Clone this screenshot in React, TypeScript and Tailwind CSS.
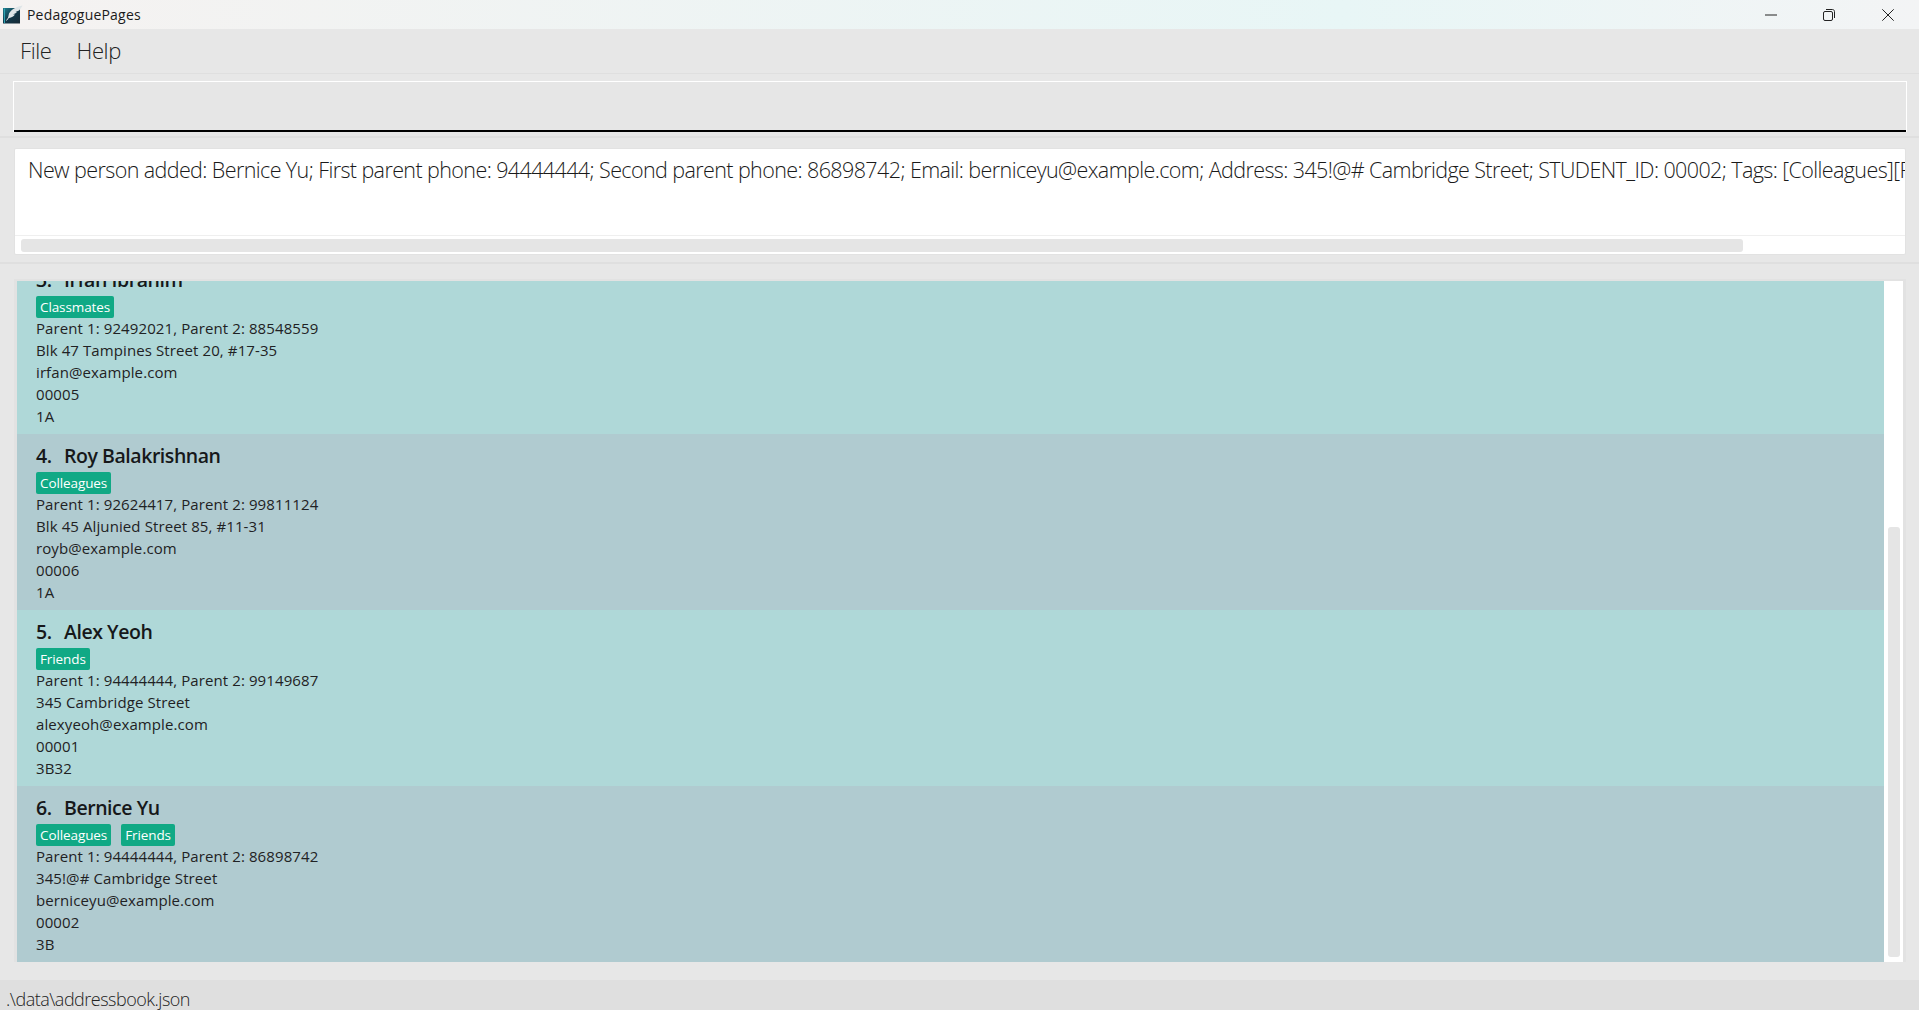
const SANS = 'font-["Open_Sans","Noto_Sans",sans-serif]'

interface Person {
  index: number
  name: string
  tags: string[]
  phones: string
  address: string
  email: string
  studentId: string
  className: string
}

const people: Person[] = [
  {
    index: 3,
    name: 'Irfan Ibrahim',
    tags: ['Classmates'],
    phones: 'Parent 1: 92492021, Parent 2: 88548559',
    address: 'Blk 47 Tampines Street 20, #17-35',
    email: 'irfan@example.com',
    studentId: '00005',
    className: '1A',
  },
  {
    index: 4,
    name: 'Roy Balakrishnan',
    tags: ['Colleagues'],
    phones: 'Parent 1: 92624417, Parent 2: 99811124',
    address: 'Blk 45 Aljunied Street 85, #11-31',
    email: 'royb@example.com',
    studentId: '00006',
    className: '1A',
  },
  {
    index: 5,
    name: 'Alex Yeoh',
    tags: ['Friends'],
    phones: 'Parent 1: 94444444, Parent 2: 99149687',
    address: '345 Cambridge Street',
    email: 'alexyeoh@example.com',
    studentId: '00001',
    className: '3B32',
  },
  {
    index: 6,
    name: 'Bernice Yu',
    tags: ['Colleagues', 'Friends'],
    phones: 'Parent 1: 94444444, Parent 2: 86898742',
    address: '345!@# Cambridge Street',
    email: 'berniceyu@example.com',
    studentId: '00002',
    className: '3B',
  },
]

const resultText =
  'New person added: Bernice Yu; First parent phone: 94444444; Second parent phone: 86898742; Email: berniceyu@example.com; Address: 345!@# Cambridge Street; STUDENT_ID: 00002; Tags: [Colleagues][Friends]'

function AppIcon() {
  return (
    <svg width="20" height="19" viewBox="0 0 20 19" className="shrink-0">
      <defs>
        <linearGradient id="iconBg" x1="0" y1="0" x2="1" y2="1">
          <stop offset="0" stopColor="#1f7f8f" />
          <stop offset="0.5" stopColor="#12384a" />
          <stop offset="1" stopColor="#1a2a36" />
        </linearGradient>
      </defs>
      <rect x="0" y="3" width="17" height="15.5" fill="url(#iconBg)" />
      <path d="M1.5 3.5V18" stroke="#2fa3b3" strokeWidth="1" />
      <path d="M19.5 0.5C14 1.5 8.5 4 6 8.5L5 13C8 13 10.5 11.5 12 9.5L10 9.5L14 7.5L12.5 7L16 5.5C17.5 4 18.8 2.2 19.5 0.5Z" fill="#dfe5e8" />
      <path d="M8 9.5L3.5 15.5" stroke="#dfe5e8" strokeWidth="1" />
    </svg>
  )
}

function WindowControls() {
  return (
    <div className="flex items-center ml-auto">
      <svg width="12" height="12" viewBox="0 0 12 12" className="mr-[46px]">
        <path d="M0 6H12" stroke="#222" strokeWidth="1" />
      </svg>
      <svg width="12" height="12" viewBox="0 0 12 12" className="mr-[47px]">
        <rect x="0.5" y="2.5" width="9" height="9" rx="1.5" fill="none" stroke="#222" />
        <path d="M3 0.5H9.5C10.6 0.5 11.5 1.4 11.5 2.5V9" fill="none" stroke="#222" />
      </svg>
      <svg width="12" height="12" viewBox="0 0 12 12" className="mr-[25px]">
        <path d="M0.3 0.3L11.7 11.7M11.7 0.3L0.3 11.7" stroke="#222" strokeWidth="1" />
      </svg>
    </div>
  )
}

function PersonCard({ person, shaded }: { person: Person; shaded: boolean }) {
  return (
    <div className={`h-[176px] shrink-0 pl-[19px] pt-[7px] ${shaded ? 'bg-[#b0cbd0]' : 'bg-[#afd8d8]'}`}>
      <div className="h-[30px] flex items-center text-[19.5px] font-semibold text-[#16181a] whitespace-nowrap tracking-[-0.45px]">
        <span className="w-[28px] shrink-0">{person.index}.</span>
        <span>{person.name}</span>
      </div>
      <div className="flex gap-[10px] h-[22px] mt-[1px]">
        {person.tags.map(tag => (
          <span key={tag} className="h-[22px] px-[4px] flex items-center rounded-[2px] bg-[#10a985] text-white text-[13.5px] tracking-[-0.1px]">
            {tag}
          </span>
        ))}
      </div>
      <div className="-mt-[1px] text-[15px] leading-[22px] text-[#1f2224] tracking-[0.1px]">
        <div>{person.phones}</div>
        <div>{person.address}</div>
        <div>{person.email}</div>
        <div>{person.studentId}</div>
        <div>{person.className}</div>
      </div>
    </div>
  )
}

export default function App() {
  return (
    <div className={`w-[1919px] h-[1010px] flex flex-col overflow-hidden bg-[#e7e7e7] ${SANS}`}>
      {/* Title bar */}
      <div className="h-[29px] shrink-0 flex items-center pl-[3px] bg-linear-to-r from-[#f5f2f1] via-[#e8f6f6] via-70% to-[#f3f4f5]">
        <AppIcon />
        <span className="ml-[4px] text-[14px] text-[#1a1a1a] tracking-[0.2px]">PedagoguePages</span>
        <WindowControls />
      </div>

      {/* Menu */}
      <div className="h-[45px] shrink-0 flex items-center pl-[20px] pb-[2px] gap-[25px] border-b border-[#dfdfdf] text-[22px] font-light text-[#222] tracking-[-0.4px]">
        <span>File</span>
        <span>Help</span>
      </div>

      {/* Command box */}
      <div className="h-[64px] shrink-0 pt-[7px] pl-[13px] pr-[12px] border-b-2 border-[#dfdfdf]">
        <div className="h-[51px] border border-b-0 border-white bg-[#e6e6e6] shadow-[inset_0_-2px_0_#000]" />
      </div>

      {/* Result display */}
      <div className="h-[126px] shrink-0 pt-[10px] pl-[14px] pr-[13px] border-b-2 border-[#dfdfdf]">
        <div className="h-[107px] flex flex-col bg-white border border-[#e2e2e2] rounded-[2px]">
          <div className="h-[87px] shrink-0 overflow-hidden border-b border-[#efefef] pl-[13px] pt-[6px] text-[21.5px] font-light text-[#1a1a1a] whitespace-nowrap tracking-[-0.6px] leading-[30px]">
            {resultText}
          </div>
          <div className="flex-1 pl-[6px] pt-[3px]">
            <div className="w-[1722px] h-[13px] rounded-[3px] bg-[#e5e5e5]" />
          </div>
        </div>
      </div>

      {/* Person list */}
      <div className="flex-1 min-h-0 pt-[15px] pl-[14px] pr-[13px]">
        <div className="h-[683px] flex border-t-2 border-x-[3px] border-[#e2e2e2] bg-white">
          <div className="flex-1 min-w-0 flex flex-col justify-end overflow-hidden">
            {people.map((person, i) => (
              <PersonCard key={person.index} person={person} shaded={i % 2 === 1} />
            ))}
          </div>
          <div className="w-[19px] shrink-0 pl-[4px] pr-[3px] flex flex-col justify-end pb-[5px]">
            <div className="h-[430px] rounded-[3px] bg-[#e5e5e5]" />
          </div>
        </div>
      </div>

      {/* Status bar */}
      <div className="h-[30px] shrink-0 flex items-center pl-[6px] pt-[8px] bg-[#dfdfdf] text-[18px] font-light text-[#222] tracking-[-0.5px]">
        .\data\addressbook.json
      </div>
    </div>
  )
}
